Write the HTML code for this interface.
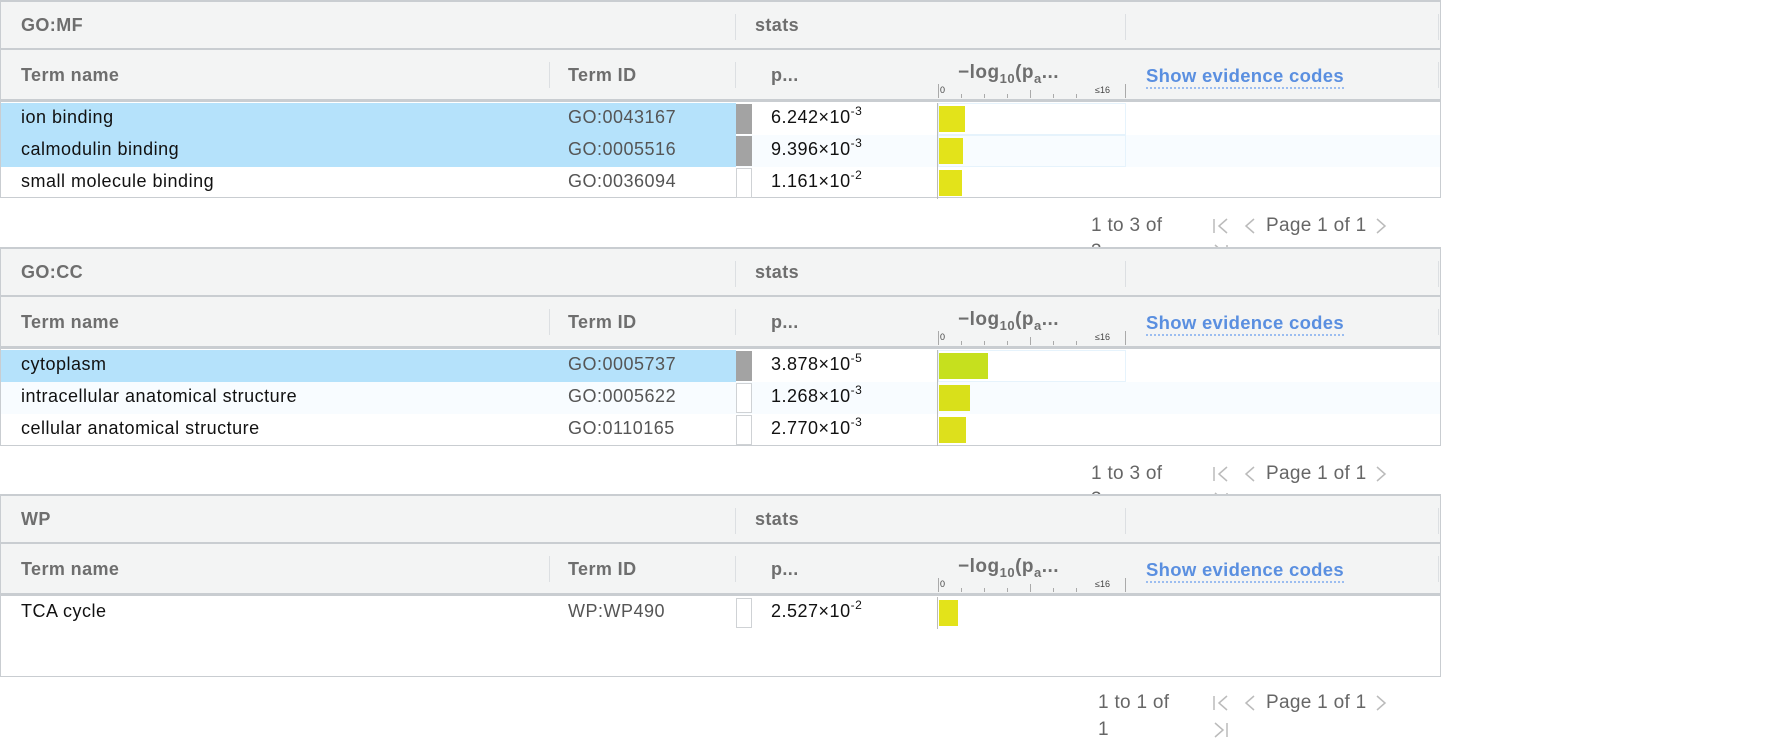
<!DOCTYPE html>
<html><head><meta charset="utf-8"><style>
*{box-sizing:border-box;margin:0;padding:0}
body{width:1782px;height:725px;background:#fff;position:relative;overflow:hidden;font-family:"Liberation Sans",Arial,sans-serif;font-size:18px;letter-spacing:0.5px;color:#111}
.t{position:absolute;left:0;width:1441px;border:1px solid #c9cdd1;border-top:2px solid #c9cdd1;background:#fff}
.a{position:absolute}
.gh{position:absolute;left:0;top:0;width:100%;height:48px;background:#f3f4f4;border-bottom:2px solid #c9cdd1}
.ch{position:absolute;left:0;top:48px;width:100%;height:52px;background:#f3f4f4;border-bottom:3px solid #c9cdd1}
.h{position:absolute;font-weight:bold;color:#6e6e6e;font-size:18px;letter-spacing:0.4px}
.sep{position:absolute;width:1px;background:#dcdfe2}
.row{position:absolute;left:0;width:100%;height:32px}
.row span{position:absolute;top:4px}
.id{color:#555;left:567px}
.nm{left:20px}
.cb{position:absolute;left:735px;top:1px;width:16px;height:30px;border:1px solid #cfd2d5;background:#fff}
.cb.g{background:#a3a3a3;border-color:#a3a3a3}
.pv{left:770px}
sup{font-size:12px;position:relative;top:-3px;vertical-align:top}
.bar{position:absolute;left:938px;top:3px;height:26px}
.pg{position:absolute;color:#666;font-size:19px;letter-spacing:0.3px}
.ic{position:absolute}
.lnk{color:#5a8fe0;font-weight:bold;border-bottom:2px dotted #9bbdf0;font-size:18.5px;letter-spacing:0.3px}
.tick{position:absolute;width:1px;background:#aaa}
.lg{position:absolute;left:957px;top:12px;font-weight:bold;color:#6e6e6e;font-size:19px}
.lg sub{font-size:13px}
</style></head><body>

<!-- TABLE 1 -->
<div class="t" style="top:0;height:198px">
 <div class="gh"><div class="h" style="left:20px;top:13px">GO:MF</div><div class="h" style="left:754px;top:13px">stats</div>
  <div class="sep" style="left:734px;top:12px;height:26px"></div><div class="sep" style="left:1124px;top:12px;height:26px"></div><div class="sep" style="left:1437px;top:12px;height:26px"></div></div>
 <div class="ch"><div class="h" style="left:20px;top:15px">Term name</div><div class="h" style="left:567px;top:15px">Term ID</div><div class="h" style="left:770px;top:15px">p...</div>
  <div class="lg">−log<sub>10</sub>(p<sub>a</sub>...</div>
  <div class="a" style="left:939px;top:35px;font-size:9px;color:#444;letter-spacing:0">0</div><div class="a" style="left:1094px;top:35px;font-size:9px;color:#444;letter-spacing:0">≤16</div>
  <div class="tick" style="left:937px;top:34px;height:14px"></div><div class="tick" style="left:960px;top:44px;height:4px"></div><div class="tick" style="left:983px;top:44px;height:4px"></div><div class="tick" style="left:1006px;top:44px;height:4px"></div><div class="tick" style="left:1029px;top:40px;height:8px"></div><div class="tick" style="left:1052px;top:44px;height:4px"></div><div class="tick" style="left:1075px;top:44px;height:4px"></div><div class="tick" style="left:1124px;top:34px;height:14px"></div>
  <div class="a lnk" style="left:1145px;top:15px">Show evidence codes</div>
  <div class="sep" style="left:548px;top:12px;height:26px"></div><div class="sep" style="left:734px;top:12px;height:26px"></div><div class="sep" style="left:1437px;top:12px;height:26px"></div></div>
 <div class="row" style="top:101px;background:#fff"><div class="a" style="left:0;top:0;width:735px;height:32px;background:#b5e2fb"></div><span class="nm">ion binding</span><span class="id">GO:0043167</span><div class="cb g"></div><span class="pv">6.242×10<sup>-3</sup></span><div class="a" style="left:937px;top:0;width:188px;height:32px;border:1px solid #e6f3fc"></div><div class="bar" style="width:26px;background:#e3e31a"></div></div>
 <div class="row" style="top:133px;background:#f8fcff"><div class="a" style="left:0;top:0;width:735px;height:32px;background:#b5e2fb"></div><span class="nm">calmodulin binding</span><span class="id">GO:0005516</span><div class="cb g"></div><span class="pv">9.396×10<sup>-3</sup></span><div class="a" style="left:937px;top:0;width:188px;height:32px;border:1px solid #e6f3fc"></div><div class="bar" style="width:24px;background:#e3e31a"></div></div>
 <div class="row" style="top:165px"><span class="nm">small molecule binding</span><span class="id">GO:0036094</span><div class="cb"></div><span class="pv">1.161×10<sup>-2</sup></span><div class="bar" style="width:23px;background:#e3e31a"></div></div>
 <div class="a" style="left:936px;top:101px;width:1px;height:96px;background:#bbb"></div>
</div>
<div class="pg" style="left:1091px;top:215px">1 to 3 of</div>
<svg class="ic" style="left:1212px;top:216px" width="60" height="20" fill="none" stroke="#bbb" stroke-width="1.5"><path d="M2 3v14M15 3l-8 7 8 7M42 3l-8 7 8 7"/></svg>
<div class="pg" style="left:1266px;top:215px">Page 1 of 1</div>
<svg class="ic" style="left:1374px;top:216px" width="14" height="20" fill="none" stroke="#bbb" stroke-width="1.5"><path d="M3 3l8 7-8 7"/></svg>
<div class="pg" style="left:1091px;top:241px">3</div>
<svg class="ic" style="left:1212px;top:242px" width="20" height="20" fill="none" stroke="#bbb" stroke-width="1.5"><path d="M3 3l8 7-8 7M15 3v14"/></svg>

<!-- TABLE 2 -->
<div class="t" style="top:247px;height:199px">
 <div class="gh"><div class="h" style="left:20px;top:13px">GO:CC</div><div class="h" style="left:754px;top:13px">stats</div>
  <div class="sep" style="left:734px;top:12px;height:26px"></div><div class="sep" style="left:1124px;top:12px;height:26px"></div><div class="sep" style="left:1437px;top:12px;height:26px"></div></div>
 <div class="ch"><div class="h" style="left:20px;top:15px">Term name</div><div class="h" style="left:567px;top:15px">Term ID</div><div class="h" style="left:770px;top:15px">p...</div>
  <div class="lg">−log<sub>10</sub>(p<sub>a</sub>...</div>
  <div class="a" style="left:939px;top:35px;font-size:9px;color:#444;letter-spacing:0">0</div><div class="a" style="left:1094px;top:35px;font-size:9px;color:#444;letter-spacing:0">≤16</div>
  <div class="tick" style="left:937px;top:34px;height:14px"></div><div class="tick" style="left:960px;top:44px;height:4px"></div><div class="tick" style="left:983px;top:44px;height:4px"></div><div class="tick" style="left:1006px;top:44px;height:4px"></div><div class="tick" style="left:1029px;top:40px;height:8px"></div><div class="tick" style="left:1052px;top:44px;height:4px"></div><div class="tick" style="left:1075px;top:44px;height:4px"></div><div class="tick" style="left:1124px;top:34px;height:14px"></div>
  <div class="a lnk" style="left:1145px;top:15px">Show evidence codes</div>
  <div class="sep" style="left:548px;top:12px;height:26px"></div><div class="sep" style="left:734px;top:12px;height:26px"></div><div class="sep" style="left:1437px;top:12px;height:26px"></div></div>
 <div class="row" style="top:101px"><div class="a" style="left:0;top:0;width:735px;height:32px;background:#b5e2fb"></div><span class="nm">cytoplasm</span><span class="id">GO:0005737</span><div class="cb g"></div><span class="pv">3.878×10<sup>-5</sup></span><div class="a" style="left:937px;top:0;width:188px;height:32px;border:1px solid #e6f3fc"></div><div class="bar" style="width:49px;background:#c6e01e"></div></div>
 <div class="row" style="top:133px;background:#f8fcff"><span class="nm">intracellular anatomical structure</span><span class="id">GO:0005622</span><div class="cb"></div><span class="pv">1.268×10<sup>-3</sup></span><div class="bar" style="width:31px;background:#d9e01a"></div></div>
 <div class="row" style="top:165px"><span class="nm">cellular anatomical structure</span><span class="id">GO:0110165</span><div class="cb"></div><span class="pv">2.770×10<sup>-3</sup></span><div class="bar" style="width:27px;background:#dde01c"></div></div>
 <div class="a" style="left:936px;top:101px;width:1px;height:96px;background:#bbb"></div>
</div>
<div class="pg" style="left:1091px;top:463px">1 to 3 of</div>
<svg class="ic" style="left:1212px;top:464px" width="60" height="20" fill="none" stroke="#bbb" stroke-width="1.5"><path d="M2 3v14M15 3l-8 7 8 7M42 3l-8 7 8 7"/></svg>
<div class="pg" style="left:1266px;top:463px">Page 1 of 1</div>
<svg class="ic" style="left:1374px;top:464px" width="14" height="20" fill="none" stroke="#bbb" stroke-width="1.5"><path d="M3 3l8 7-8 7"/></svg>
<div class="pg" style="left:1091px;top:489px">3</div>
<svg class="ic" style="left:1212px;top:490px" width="20" height="20" fill="none" stroke="#bbb" stroke-width="1.5"><path d="M3 3l8 7-8 7M15 3v14"/></svg>

<!-- TABLE 3 -->
<div class="t" style="top:494px;height:183px">
 <div class="gh"><div class="h" style="left:20px;top:13px">WP</div><div class="h" style="left:754px;top:13px">stats</div>
  <div class="sep" style="left:734px;top:12px;height:26px"></div><div class="sep" style="left:1124px;top:12px;height:26px"></div><div class="sep" style="left:1437px;top:12px;height:26px"></div></div>
 <div class="ch"><div class="h" style="left:20px;top:15px">Term name</div><div class="h" style="left:567px;top:15px">Term ID</div><div class="h" style="left:770px;top:15px">p...</div>
  <div class="lg">−log<sub>10</sub>(p<sub>a</sub>...</div>
  <div class="a" style="left:939px;top:35px;font-size:9px;color:#444;letter-spacing:0">0</div><div class="a" style="left:1094px;top:35px;font-size:9px;color:#444;letter-spacing:0">≤16</div>
  <div class="tick" style="left:937px;top:34px;height:14px"></div><div class="tick" style="left:960px;top:44px;height:4px"></div><div class="tick" style="left:983px;top:44px;height:4px"></div><div class="tick" style="left:1006px;top:44px;height:4px"></div><div class="tick" style="left:1029px;top:40px;height:8px"></div><div class="tick" style="left:1052px;top:44px;height:4px"></div><div class="tick" style="left:1075px;top:44px;height:4px"></div><div class="tick" style="left:1124px;top:34px;height:14px"></div>
  <div class="a lnk" style="left:1145px;top:15px">Show evidence codes</div>
  <div class="sep" style="left:548px;top:12px;height:26px"></div><div class="sep" style="left:734px;top:12px;height:26px"></div><div class="sep" style="left:1437px;top:12px;height:26px"></div></div>
 <div class="row" style="top:101px"><span class="nm">TCA cycle</span><span class="id">WP:WP490</span><div class="cb"></div><span class="pv">2.527×10<sup>-2</sup></span><div class="bar" style="width:19px;background:#e3e31a"></div></div>
 <div class="a" style="left:936px;top:101px;width:1px;height:32px;background:#bbb"></div>
</div>
<div class="pg" style="left:1098px;top:692px">1 to 1 of</div>
<svg class="ic" style="left:1212px;top:693px" width="60" height="20" fill="none" stroke="#bbb" stroke-width="1.5"><path d="M2 3v14M15 3l-8 7 8 7M42 3l-8 7 8 7"/></svg>
<div class="pg" style="left:1266px;top:692px">Page 1 of 1</div>
<svg class="ic" style="left:1374px;top:693px" width="14" height="20" fill="none" stroke="#bbb" stroke-width="1.5"><path d="M3 3l8 7-8 7"/></svg>
<div class="pg" style="left:1098px;top:719px">1</div>
<svg class="ic" style="left:1212px;top:720px" width="20" height="20" fill="none" stroke="#bbb" stroke-width="1.5"><path d="M3 3l8 7-8 7M15 3v14"/></svg>
</body></html>
